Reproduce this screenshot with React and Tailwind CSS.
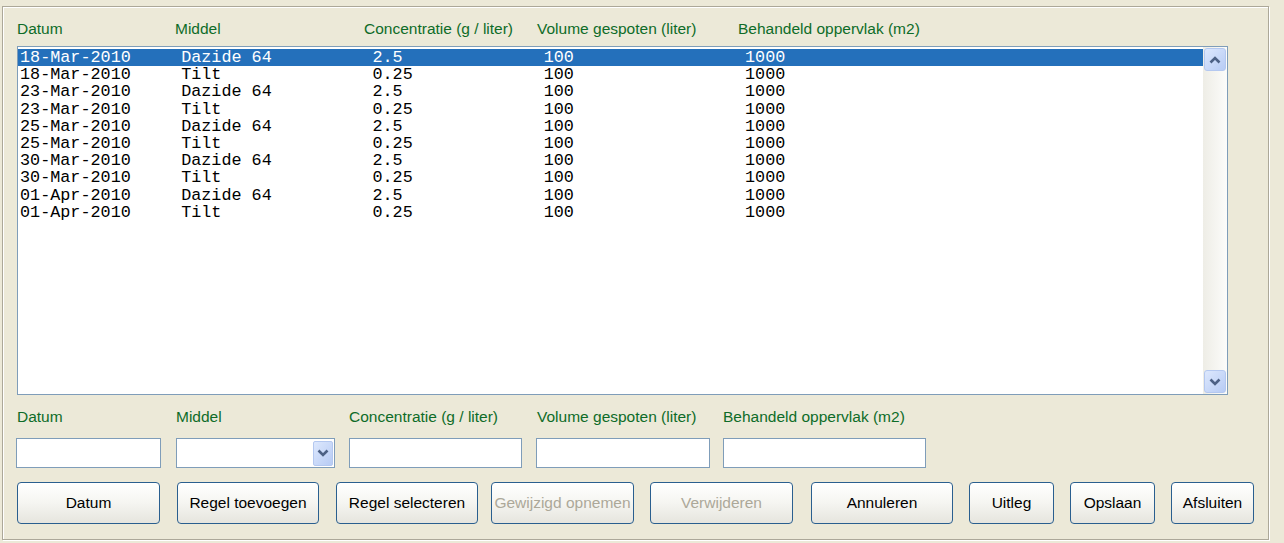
import React from 'react'

const rows = [
    ['18-Mar-2010', 'Dazide 64', '2.5', '100', '1000'],
    ['18-Mar-2010', 'Tilt', '0.25', '100', '1000'],
    ['23-Mar-2010', 'Dazide 64', '2.5', '100', '1000'],
    ['23-Mar-2010', 'Tilt', '0.25', '100', '1000'],
    ['25-Mar-2010', 'Dazide 64', '2.5', '100', '1000'],
    ['25-Mar-2010', 'Tilt', '0.25', '100', '1000'],
    ['30-Mar-2010', 'Dazide 64', '2.5', '100', '1000'],
    ['30-Mar-2010', 'Tilt', '0.25', '100', '1000'],
    ['01-Apr-2010', 'Dazide 64', '2.5', '100', '1000'],
    ['01-Apr-2010', 'Tilt', '0.25', '100', '1000'],
]

const sans = "font-['Liberation_Sans',Arial,sans-serif]"

const Chevron = ({ up }) => (
    <svg width="12" height="8" viewBox="0 0 12 8">
        <polyline
            points={up ? '1.5,6.5 6,2 10.5,6.5' : '1.5,1.5 6,6 10.5,1.5'}
            fill="none"
            stroke="#4d6185"
            strokeWidth="2.6"
        />
    </svg>
)

const ScrollBtn = ({ up }) => (
    <div className="w-[22px] h-[23px] mx-auto rounded-[3px] border border-[#b4c8f0] bg-gradient-to-br from-[#dde8fd] to-[#b7cbf4] flex items-center justify-center">
        <Chevron up={up} />
    </div>
)

const Btn = ({ w, ml, disabled, children }) => (
    <div
        className={`${w} ${ml} h-[42px] shrink-0 rounded-[4px] border border-[#2a5f8f] bg-gradient-to-b from-[#ffffff] via-[#f5f5f1] to-[#e6e5de] flex items-center justify-center whitespace-nowrap overflow-hidden text-[15.5px] ${disabled ? 'text-[#aca899]' : 'text-black'}`}
    >
        {children}
    </div>
)

const Field = ({ w, ml, label, lpad, combo }) => (
    <div className={`${w} ${ml} shrink-0 flex flex-col`}>
        <div className={`h-[18px] leading-[18px] text-[15.5px] text-[#0e6c28] ${lpad}`}>{label}</div>
        <div className="mt-[12px] h-[30px] border border-[#7f9db9] bg-white flex justify-end items-center pr-[1px]">
            {combo && (
                <div className="w-[20px] h-[25px] rounded-[2px] border border-[#b4c8f0] bg-gradient-to-br from-[#dde8fd] to-[#b7cbf4] flex items-center justify-center">
                    <Chevron />
                </div>
            )}
        </div>
    </div>
)

export default function App() {
    return (
        <div className={`w-[1284px] h-[543px] bg-[#ece9d8] overflow-hidden ${sans}`}>
            <div className="ml-[2px] mt-[6px] w-[1267px] h-[534px] border border-[#aca899] shadow-[inset_1px_1px_0_#fff,1px_1px_0_#fff] pl-[14px] pt-[13px]">
                {/* Header labels */}
                <div className="flex h-[18px] leading-[18px] text-[15.5px] text-[#0e6c28]">
                    <div className="w-[158px]">Datum</div>
                    <div className="w-[189px]">Middel</div>
                    <div className="w-[173px]">Concentratie (g / liter)</div>
                    <div className="w-[201px]">Volume gespoten (liter)</div>
                    <div>Behandeld oppervlak (m2)</div>
                </div>

                {/* List */}
                <div className="mt-[8px] w-[1211px] h-[349px] border border-[#7f9db9] bg-white flex">
                    <div className="flex-1 pt-[2px] font-['Liberation_Mono','Courier_New',monospace] text-[16.8px] leading-[17.2px]">
                        {rows.map((r, i) => (
                            <div
                                key={i}
                                className={`flex pl-[2px] whitespace-pre ${i === 0 ? 'bg-[#2470bb] text-white' : 'text-black'}`}
                            >
                                <span className="w-[16ch]">{r[0]}</span>
                                <span className="w-[19ch]">{r[1]}</span>
                                <span className="w-[17ch]">{r[2]}</span>
                                <span className="w-[20ch]">{r[3]}</span>
                                <span>{r[4]}</span>
                            </div>
                        ))}
                    </div>
                    <div className="w-[24px] flex flex-col justify-between py-[1px] bg-gradient-to-r from-[#eeede6] to-[#fcfcfa]">
                        <ScrollBtn up />
                        <ScrollBtn />
                    </div>
                </div>

                {/* Input fields */}
                <div className="mt-[13px] flex">
                    <Field w="w-[145px]" ml="ml-[-1px]" label="Datum" lpad="pl-[1px]" />
                    <Field w="w-[159px]" ml="ml-[15px]" label="Middel" combo />
                    <Field w="w-[173px]" ml="ml-[14px]" label="Concentratie (g / liter)" />
                    <Field w="w-[174px]" ml="ml-[14px]" label="Volume gespoten (liter)" lpad="pl-[1px]" />
                    <Field w="w-[203px]" ml="ml-[13px]" label="Behandeld oppervlak (m2)" />
                </div>

                {/* Buttons */}
                <div className="mt-[14px] flex">
                    <Btn w="w-[143px]" ml="">Datum</Btn>
                    <Btn w="w-[142px]" ml="ml-[17px]">Regel toevoegen</Btn>
                    <Btn w="w-[142px]" ml="ml-[17px]">Regel selecteren</Btn>
                    <Btn w="w-[143px]" ml="ml-[13px]" disabled>Gewijzigd opnemen</Btn>
                    <Btn w="w-[143px]" ml="ml-[16px]" disabled>Verwijderen</Btn>
                    <Btn w="w-[142px]" ml="ml-[18px]">Annuleren</Btn>
                    <Btn w="w-[85px]" ml="ml-[16px]">Uitleg</Btn>
                    <Btn w="w-[85px]" ml="ml-[16px]">Opslaan</Btn>
                    <Btn w="w-[83px]" ml="ml-[16px]">Afsluiten</Btn>
                </div>
            </div>
        </div>
    )
}
